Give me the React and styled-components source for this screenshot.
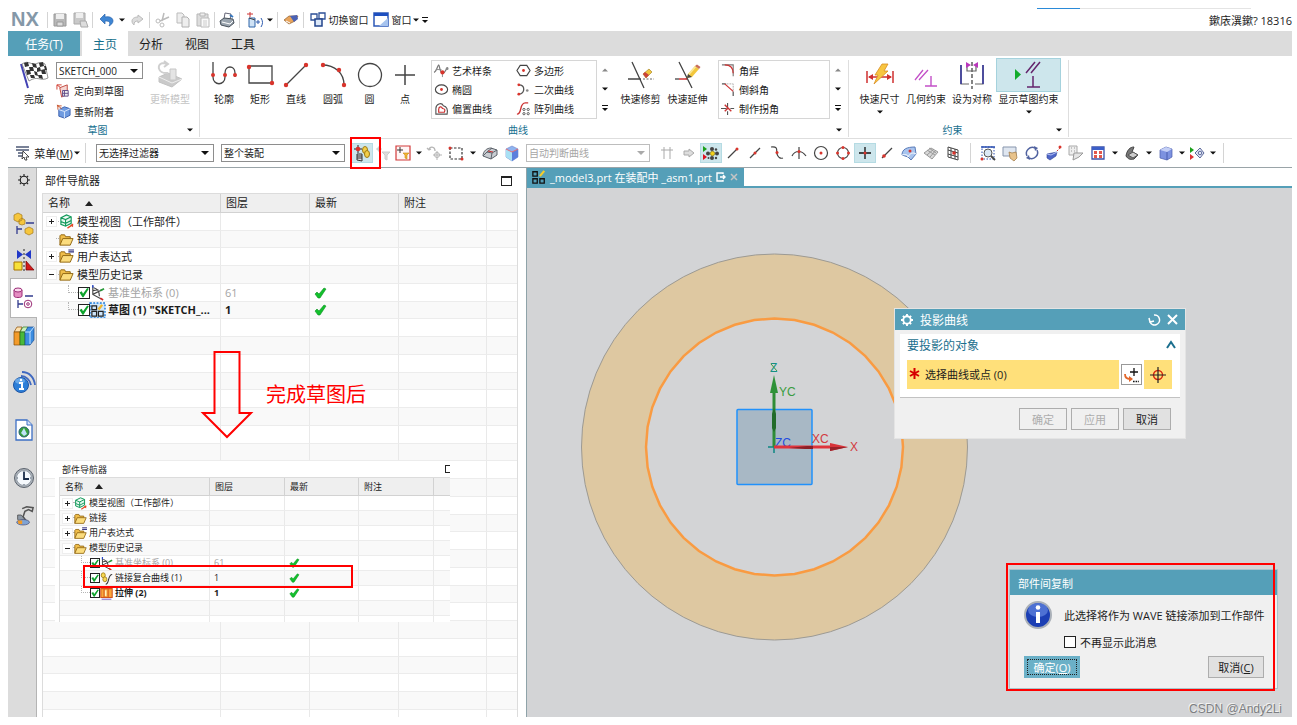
import React from "react";
import styled, { createGlobalStyle, css } from "styled-components";

const teal = "#559fb8";
const hot = "#cde6ec";
const ink = "#1c1c1c";
const font = '"Open Sans", "Noto Sans CJK SC", sans-serif';

const Global = createGlobalStyle`
  * { box-sizing: border-box; }
  body { margin: 0; background: #fff; color: ${ink}; font-family: ${font}; font-size: 11px; }
  button, input, select { font: inherit; color: inherit; margin: 0; padding: 0; }
  button { background: none; border: 0; white-space: nowrap; }
`;

/* ---------- icons ---------- */
const Svg = styled.svg`
  display: block;
  flex: none;
  overflow: visible;
`;
const Icon = ({ size = 16, box = 16, children, ...p }) => (
  <Svg width={size} height={size} viewBox={`0 0 ${box} ${box}`} fill="none" stroke="#444" strokeWidth="1" aria-hidden="true" {...p}>
    {children}
  </Svg>
);
const Dot = ({ x, y, r = 1.5 }) => <circle cx={x} cy={y} r={r} fill="#d8342c" stroke="none" />;
const Arrow = ({ color = "#111", bar, up }) => (
  <Svg width="6" height={bar ? 6 : 4} viewBox={bar ? "0 0 6 6" : "0 0 6 4"} aria-hidden="true">
    {bar && <path d="M0 0h6v1H0z" fill={color} />}
    <path d={bar ? "M0 3h6L3 6z" : up ? "M0 3.5h6L3 .5z" : "M0 .5h6L3 3.5z"} fill={color} />
  </Svg>
);

const pencil = (
  <g stroke="none">
    <path d="M9 13l1-4 7-8 4 3-7 8z" fill="#f3c73c" />
    <path d="M10 9l7-8 1.300 1-7 8z" fill="#fae896" />
    <path d="M17 1l2-1.500L22.500 2 21 4z" fill="#c86e5a" />
    <path d="M9 13l1-4 4 3z" fill="#444" />
  </g>
);

const art = {
  save: <><path d="M2 2h12v12H2z" fill="#b7b7b7" stroke="#999" /><path d="M4 2h8v5H4z" fill="#eee" stroke="none" /><path d="M5 10h6v4H5z" fill="#ddd" stroke="#999" /></>,
  saveAs: <><path d="M1 1h11v11H1z" fill="#c9c9c9" stroke="#aaa" /><path d="M3 1h7v5H3z" fill="#eee" stroke="none" /><path d="M7 9h6l2 6H8z" fill="#ddd" stroke="#aaa" /></>,
  undo: <path d="M2 7l5-5v3c5-1 8 1 8 4 0 2-2 4-4 5 2-4 0-5-4-5v3z" fill="#3f86d4" stroke="#2b64ac" strokeWidth=".7" />,
  redo: <path d="M14 7L9 3v2c-4 0-6 2-6 4 0 2 1 3 2 4 0-3 1-4 4-4v2z" fill="#ddd" stroke="#bbb" />,
  cut: <><path d="M10 1L8 9M15 5L6 9" stroke="#bbb" strokeWidth="1.500" /><circle cx="4" cy="9" r="2" stroke="#bbb" /><circle cx="8" cy="13" r="2" stroke="#bbb" /></>,
  copy: <><path d="M2 1h5l2 2v8H2z" fill="#eee" stroke="#bbb" /><path d="M7 5h5l2 2v8H7z" fill="#eee" stroke="#b0b0b0" /></>,
  paste: <><path d="M2 2h11v12H2z" fill="#ddd" stroke="#b7b7b7" /><path d="M5 1h5v3H5z" fill="#eee" stroke="#b7b7b7" /><path d="M6 6h8v9H6z" fill="#fafafa" stroke="#bbb" /><path d="M8 9h4M8 11h4M8 13h4" stroke="#ccc" /></>,
  print: <><path d="M6 1l6 1-1 6-6-1z" fill="#fff" stroke="#667" /><path d="M1 9l4-3 9 1 1 4-5 4-8-2z" fill="#9aa4ae" stroke="#47505a" /><path d="M3 10l8 2 3-3" stroke="#fff" /><path d="M11 3l3 2" stroke="#3476bf" strokeWidth="2" /></>,
  datum: <><path d="M0 2h6M3 0v5" stroke="#c33" /><path d="M2 6h6v9H2z" fill="#cfe2f5" stroke="#2e64a8" /><path d="M2 6l6 2" stroke="#444" /><path d="M9 10h4M11 8v4M14 6c2 3 2 6 0 9" stroke="#2e5cb0" /></>,
  wipe: <><path d="M1 8l5-4 9 0-3 5-6 3z" fill="#e8a45b" stroke="#91602e" strokeWidth=".7" /><path d="M7 4l7-1 1 4-4 3z" fill="#4b62b4" stroke="none" /><path d="M3 9l4 2" stroke="#fff" /></>,
  cascade: <><path d="M1 2h6v6H1zM9 1h6v6H9z" fill="#fff" stroke="#2c4f96" strokeWidth="1.300" /><path d="M5 7h7v7H5z" fill="#dce8f8" stroke="#23448c" strokeWidth="1.500" /></>,
  windowBlue: <><path d="M1 1h14v13H1z" fill="#fff" stroke="#2c58b8" strokeWidth="1.500" /><path d="M1 1h14v3H1z" fill="#1e4fc0" stroke="none" /><path d="M15 14V6L6 14z" fill="#a7c4ef" stroke="none" /></>,
  orient: <><path d="M1 2h5M1 2v5M1 2l4 3" stroke="#d13b2e" /><path d="M4 5l8-3v10l-6 3z" fill="#f6d6d2" stroke="#c0453c" /><path d="M7 8h6v6H7zM9 8v6M7 11h6" fill="#eee" stroke="#5f4a86" /></>,
  reattach: <><path d="M3 6l6-3 6 2v7l-6 3-6-2z" fill="#6f9be0" stroke="#3a5fae" /><path d="M3 6l6 2 6-3M9 8v7" stroke="#dbe8fb" /><path d="M1 2h5M2 1v5M1 1l5 4" stroke="#c8532c" /></>,
  spline: <><path d="M0 10c3-1 4-8 5-8s1 8 4 9 3-5 6-6" stroke="#777" strokeWidth="1.300" /><path d="M2 7h6M9 11v4" stroke="#888" /><Dot x="9" y="10" r="2.200" /><circle cx="14" cy="6" r="1.500" fill="#888" stroke="none" /></>,
  ellipse: <><ellipse cx="8" cy="8" rx="6.500" ry="5" strokeWidth="1.200" /><Dot x="8" y="8" /></>,
  offset: <><path d="M2 14V8c0-5 6-7 8-3 4 1 5 4 4 9z" stroke="#555" strokeWidth="1.200" /><path d="M5 12V9c0-3 3-4 4-1 3 0 3 2 2 4z" stroke="#c33" strokeWidth="1.300" /></>,
  polygon: <><path d="M4.500 2.500h7L15 8l-3.500 5.500h-7L1 8z" strokeWidth="1.200" /><Dot x="8" y="8" /></>,
  conic: <><path d="M3 3c7 0 7 9 0 10" stroke="#555" strokeWidth="1.400" /><Dot x="3" y="3" /><Dot x="3" y="13" /><circle cx="12" cy="9" r="1.400" fill="#888" stroke="none" /></>,
  pattern: <><path d="M1 14c6 0 2-12 9-12h3" stroke="#c33" strokeWidth="1.500" /><g stroke="#555"><circle cx="8.500" cy="9" r="1.200" /><circle cx="13" cy="9" r="1.200" /><circle cx="8.500" cy="13.500" r="1.200" /><circle cx="13" cy="13.500" r="1.200" /></g></>,
  corner: <><path d="M1 2h12v12" stroke="#777" strokeWidth="1.200" /><path d="M4 2c6 0 9 3 9 9" stroke="#c33" strokeWidth="1.300" /></>,
  chamfer: <><path d="M1 2h4M13 10v5" stroke="#555" strokeWidth="1.300" /><path d="M6 2h7v7" stroke="#aaa" strokeDasharray="2 1" /><path d="M4 2l9 8" stroke="#c33" strokeWidth="1.300" /></>,
  makeCorner: <><path d="M0 8h6M7 2v6M7 11v4M10 8h4" stroke="#555" strokeWidth="1.200" /><path d="M4 4l4 4 3 3M7 8l-3 3" stroke="#c33" strokeWidth="1.500" /></>,
  menu: <><path d="M1 2h13M1 5h13M3 8h6M3 11h5" stroke="#4d5a75" strokeWidth="1.400" /><path d="M8 6l6 6-3 0 1 3-2 0-1-3-2 2z" fill="#fff" stroke="#222" strokeWidth=".8" /></>,
  link: <><path d="M4 0v8M0 4h8" stroke="#222" /><Dot x="4" y="4" r="2.300" /><path d="M3 9v6l5 1V9zM3 11h5M3 13h5" stroke="#333" fill="#ddd" /><ellipse cx="11" cy="5" rx="2.500" ry="3.500" fill="#f3cf48" stroke="#9c7a14" /><ellipse cx="13" cy="9" rx="2.500" ry="3.500" fill="#f3cf48" stroke="#9c7a14" /></>,
  filterGrey: <><path d="M4 1v6M1 4h6" stroke="#ccc" /><circle cx="4" cy="4" r="2" fill="#ccc" stroke="none" /><path d="M7 7h8l-3 3v5l-2-1v-4z" fill="#ddd" stroke="#ccc" /></>,
  filterBox: <><path d="M1 1h14v14H1z" fill="#fff5f5" stroke="#d23a3a" strokeWidth="1.200" /><path d="M5 2v6M2 5h6" stroke="#333" /><path d="M8 8h6l-2 2v4l-2-1v-3z" fill="#f2b632" stroke="#c78610" strokeWidth=".6" /></>,
  rotateGrey: <><path d="M2 5c0-4 6-4 6 1M2 5L0 3M2 5l2-1" stroke="#b5b5b5" strokeWidth="1.300" /><path d="M10 6v9M6 10h9" stroke="#b5b5b5" /><circle cx="10" cy="10" r="2.500" stroke="#b5b5b5" /></>,
  marquee: <><path d="M2 3h12v11H2z" strokeDasharray="2.500 1.500" stroke="#333" strokeWidth="1.200" /><Dot x="2" y="3" /><Dot x="14" y="14" /></>,
  shell: <><path d="M1 11c0-5 4-8 8-8l6 2v5l-6 4z" fill="#c9cdd2" stroke="#5d636b" /><path d="M1 11l4-4 5 1-1 6M5 7l5-4M10 8l5-3" stroke="#5d636b" /><path d="M6 6l5 1" stroke="#c33" /></>,
  cubeGlass: <><path d="M2 4l6-3 6 3v8l-6 4-6-4z" fill="#8fb4f0" stroke="#6d83c8" strokeWidth=".6" /><path d="M2 4l6 3v9l-6-4z" fill="#a8e0f4" stroke="none" /><path d="M8 7l6-3v8l-6 4z" fill="#5b7fdc" stroke="none" /><path d="M2 4l6 3 6-3" stroke="#e46b74" /></>,
  hash: <path d="M5 2v12M11 2v12M2 5h12" stroke="#aaa" />,
  arrowGrey: <path d="M3 6h5V4l5 4-5 4v-2H3z" fill="#ddd" stroke="#aaa" />,
  snapAll: <><path d="M0 1v6l4-3z" fill="#1aa01a" stroke="none" /><path d="M0 9v6l4-3z" fill="#d12" stroke="none" /><g fill="#444" stroke="none"><circle cx="9" cy="4" r="2" /><circle cx="9" cy="13" r="2" /><circle cx="5" cy="8.500" r="2" /><circle cx="14" cy="8.500" r="2" /><circle cx="5.500" cy="13" r="1" /><circle cx="13" cy="4.500" r="1.200" /><circle cx="13" cy="13" r="1.200" /></g><circle cx="9.500" cy="8.500" r="2.200" fill="#f5d21a" stroke="#7a6500" strokeWidth=".6" /></>,
  endPoint: <><path d="M3 13L12 4" strokeWidth="1.200" /><Dot x="12" y="4" /></>,
  midPoint: <><path d="M3 13L13 3" strokeWidth="1.200" /><Dot x="8" y="8" /></>,
  ctrlPoint: <><path d="M2 2c8-1 5 4 6 7s3 5 6 4" strokeWidth="1.200" /><Dot x="8" y="7.500" /></>,
  intersect: <><path d="M1 11c3-6 10-6 14 0M8 2v12" strokeWidth="1.200" /><Dot x="8" y="6.500" /></>,
  arcCenter: <><circle cx="8" cy="8" r="6.500" strokeWidth="1.200" /><Dot x="8" y="8" /></>,
  quadrant: <><circle cx="8" cy="8" r="5.500" strokeWidth="1.200" /><Dot x="8" y="2.500" /><Dot x="8" y="13.500" /><Dot x="2.500" y="8" /><Dot x="13.500" y="8" /></>,
  existing: <><path d="M8 2v12M2 8h12" stroke="#111" strokeWidth="1.300" /><Dot x="8" y="8" /></>,
  onCurve: <><path d="M3 13L13 3" strokeWidth="1.200" /><Dot x="5" y="11" r="1.800" /></>,
  onFace: <><path d="M1 10C1 4 6 2 14 2l1 7-5 6-3-3z" fill="#a8c4ee" stroke="#5a7bb8" /><path d="M1 10c4-1 6 0 6 2M7 12c2-4 5-5 8-3" stroke="#fff" /><Dot x="9" y="6" /></>,
  facet: <><path d="M1 8l7-5 7 4-6 7z" fill="#d8d8d8" stroke="#999" /><path d="M4 5l8 5M6 3l7 5M4 10l7-6M7 12l6-7" stroke="#999" /></>,
  gridPt: <><path d="M3 2l10 3v10L3 12zM6 3v10M10 4v10M3 5l10 3M3 9l10 3" stroke="#444" /><Dot x="9" y="8" r="1.800" /></>,
  fit: <><path d="M2 2h12v12H2z" strokeDasharray="1.500 1.500" stroke="#2b4fb0" /><circle cx="8" cy="8" r="4" fill="#dbe8f5" stroke="#555" /><path d="M11 11l4 4" strokeWidth="1.800" /><Dot x="2" y="14" /><path d="M1 2h14" stroke="#2b4fb0" strokeWidth="1.500" /></>,
  pan: <><path d="M1 2h13v9H1z" fill="#dfe6f0" stroke="#8795ac" /><path d="M7 7l3 1 4-1 1 6-3 3-4-3z" fill="#e8c38c" stroke="#9c7642" strokeWidth=".7" /></>,
  rotate: <><path d="M3 11a6 6 0 0 1 8-8M13 5a6 6 0 0 1-8 8" stroke="#5163a0" strokeWidth="1.500" /><path d="M10 1l4 2-3 3zM6 15l-4-2 3-3z" fill="#5163a0" stroke="none" /></>,
  perspective: <><path d="M1 9l5-1 5-1-1 4-6 4-3-2z" fill="#4f66c8" stroke="#2f3f90" strokeWidth=".6" /><path d="M1 9l4 1 6-3" stroke="#b7c4f4" /><path d="M11 6l4-4" strokeDasharray="1.500 1" stroke="#c33" /><Dot x="14" y="2" /></>,
  sheet: <><path d="M1 1h8v9H1z" fill="#eee" stroke="#aaa" /><path d="M3 3h1M6 3h1M3 6h1M6 6h1" stroke="#999" /><path d="M6 8l9 0-4 4-6 3z" fill="#e5e5e5" stroke="#999" /></>,
  layout: <><path d="M2 2h12v12H2z" fill="#fff" stroke="#3c52a8" strokeWidth="1.300" /><path d="M2 2h12v3H2z" fill="#3c5fc8" stroke="none" /><path d="M4 6h3v3H4zM9 6h3v3H9zM4 10h3v3H4zM9 10h3v3H9z" fill="#e2574c" stroke="none" /></>,
  clip: <><path d="M2 11c1-6 4-9 8-9l-2 5 6 3-4 4c-4 1-6 0-8-3z" fill="#777" stroke="#444" /><path d="M4 10l5-3 5 3-5 3z" fill="#ccc" stroke="#555" /></>,
  cube: <><path d="M2 5l6-3 6 2v8l-5 3-7-2z" fill="#7d92e0" stroke="#4a5cae" strokeWidth=".7" /><path d="M2 5l7 2 5-3-6-2z" fill="#c4cff6" stroke="none" /><path d="M9 7v8" stroke="#4a5cae" /></>,
  play: <><path d="M1 2v6l4-3z" fill="#1aa01a" stroke="none" /><path d="M1 9v6l4-3z" fill="#d33" stroke="none" /><path d="M6 8l5-5 4 5-4 5z" fill="#e4e8f6" stroke="#5a689a" /><circle cx="11" cy="8" r="1.800" stroke="#5a689a" /></>,
  gear: <><circle cx="8" cy="8" r="5" stroke="#222" strokeWidth="1.500" /><path d="M8 0v3M8 13v3M0 8h3M13 8h3M2.500 2.500l2 2M11.500 11.500l2 2M2.500 13.500l2-2M11.500 4.500l2-2" stroke="#222" strokeWidth="1.500" /></>,
};

const big = {
  flag: <><path d="M1 3l7 24" stroke="#4343b4" strokeWidth="2" /><path d="M2 3c7-5 10 3 16-1 3-1 5 0 7 1l3 14c-8 4-10-3-19 3z" fill="#fff" stroke="#666" strokeWidth=".7" /><g fill="#333" stroke="none"><path d="M4 2l4-1 1 4-4 1zM12 2l4 1 1 4-4-1zM19 2l4-1 1 4-4 1zM9 6l4 0 1 4-4 0zM17 7l3-1 1 4-4 1zM24 5l2 0 1 4-2 0zM6 9l4 0 1 4-4 1zM14 10l3 1 1 4-3-1zM21 9l4-1 1 5-4 0zM10 14l4 0 1 3-4 0zM18 14l4 0 1 4-4-1z" /></g></>,
  update: <><path d="M3 16l9-4 14 6-10 8L3 21z" fill="#cacaca" stroke="#c2c2c2" /><path d="M3 16l13 6 10-4" stroke="#eee" /><path d="M14 19V8h6v11z" fill="#e4e4e4" stroke="#c6c6c6" /><path d="M12 12C1 13 0 2 8 2l3 1M8 0l4 3-4 3" stroke="#cfcfcf" strokeWidth="2" /></>,
  profile: <><path d="M3 1v15c0 9 12 9 12 0v-4c0-8 10-8 10 0v4" strokeWidth="1.300" /><Dot x="3" y="14" r="2" /><Dot x="15" y="14" r="2" /><Dot x="25" y="14" r="2" /></>,
  rect: <><path d="M3 5h23v17H3z" strokeWidth="1.300" /><Dot x="3" y="6" r="2.200" /><Dot x="26" y="22" r="2.200" /></>,
  line: <><path d="M4 24L24 4" strokeWidth="1.300" /><Dot x="4" y="24" r="2.200" /><Dot x="24" y="4" r="2.200" /></>,
  arc: <><path d="M3 4c13 0 22 8 22 20" strokeWidth="1.300" /><Dot x="4" y="4" r="2.200" /><Dot x="20" y="9" r="2.200" /><Dot x="25" y="24" r="2.200" /></>,
  circle: <circle cx="14" cy="14" r="11.500" strokeWidth="1.300" />,
  point: <path d="M14 4v20M4 14h20" strokeWidth="1.500" />,
  trim: <><path d="M5 1l12 26M1 18h13" strokeWidth="1.300" /><path d="M16 18h11" strokeDasharray="2 1.500" stroke="#666" /><path d="M16 13l6-5 3 3-6 6z" fill="#f1c63e" stroke="#9d7d1c" strokeWidth=".6" /><path d="M16 13l2-2 4 3-3 3z" fill="#c9423b" stroke="none" /></>,
  extend: <><path d="M5 1l13 26M12 18L20 10" strokeWidth="1.300" /><path d="M1 18h4" strokeWidth="1.300" /><path d="M5 18h8" stroke="#c33" strokeWidth="1.500" /><g transform="translate(4 4)">{pencil}</g></>,
  dim: <><path d="M1 10v12M27 10v12M3 16h22" stroke="#cf3030" strokeWidth="1.500" /><path d="M2 16l5-3v6zM26 16l-5-3v6z" fill="#cf3030" stroke="none" /><path d="M16 3h6l-4 7h4L8 23l4-9H9z" fill="#f7c541" stroke="#d98e22" strokeWidth=".8" /></>,
  geo: <><path d="M3 19L11 9M7 19l9-10" stroke="#c350c8" strokeWidth="1.300" /><path d="M19 15v10M13 25h12" stroke="#c350c8" strokeWidth="1.400" /></>,
  sym: <><path d="M14 1v27" strokeDasharray="4 2" strokeWidth="1.300" /><path d="M3 4v19h8M25 4v19h-8M9 5v5h9V5" stroke="#666" strokeWidth="1.200" /><path d="M3 4v19M25 4v19" stroke="#33339c" strokeWidth="1.500" /><path d="M13 4L8 1v6zM15 4l5-3v6z" fill="#b937bb" stroke="none" /></>,
  show: <><path d="M0 8v11l6-5.500z" fill="#12ac2c" stroke="none" /><path d="M11 12L20 1M16 12l9-11M18 15v11M12 26h13" stroke="#64246c" strokeWidth="1.500" /></>,
};

const rail = {
  assembly: <><path d="M1 3l4-2 4 2v5l-4 2-4-2zM6 8l3-2 3 2v4l-3 1-3-1z" fill="#f6c63d" stroke="#a3791a" strokeWidth=".7" /><path d="M13 11h8M4 14v8M4 17h5" stroke="#333c8e" strokeWidth="1.300" /><path d="M12 17l4-2 4 2v4l-4 2-4-2z" fill="#f6c63d" stroke="#a3791a" strokeWidth=".7" /></>,
  mirror: <><path d="M4 1v9l6-4.500zM18 1v9l-6-4.500z" fill="#2138c8" stroke="none" /><path d="M11 0v22" strokeDasharray="2 2" stroke="#222" /><path d="M1 13h8v8H1z" fill="#f7e13a" stroke="#a87400" /><path d="M13 12v9h8z" fill="#d31a1a" stroke="#700" strokeWidth=".7" /></>,
  part: <><path d="M1 3v6c0 2 8 2 8 0V3" fill="#e58fc3" stroke="#9b2d76" /><ellipse cx="5" cy="3" rx="4" ry="2" fill="#fbd8ee" stroke="#9b2d76" /><path d="M12 9h8M5 13v8M5 17h5" stroke="#333c8e" strokeWidth="1.300" /><circle cx="15" cy="17" r="3.800" stroke="#9b2d76" /><circle cx="15" cy="17" r="1.300" stroke="#9b2d76" /></>,
  books: <><path d="M1 7l3-5h5L7 7z" fill="#fde0ae" stroke="#874b05" strokeWidth=".7" /><path d="M1 7h6v13H1z" fill="#f39b2b" stroke="#874b05" strokeWidth=".7" /><path d="M7 7l3-5h5l-2 5z" fill="#caf0bb" stroke="#2b7a1d" strokeWidth=".7" /><path d="M7 7h5v13H7z" fill="#49b93a" stroke="#256d18" strokeWidth=".7" /><path d="M12 7l3-5h6v13l-4 5h-5z" fill="#3c8de0" stroke="#1b4e91" strokeWidth=".7" /><path d="M17 7v12M12 7h5l4-5" stroke="#bfe0ff" /></>,
  info: <><path d="M8 5c5 0 9 4 10 9M9 1c7 0 12 5 13 13" stroke="#3f68c0" strokeWidth="1.800" /><circle cx="8" cy="14" r="7.500" fill="#2e7fd8" stroke="#1d55a4" /><ellipse cx="7" cy="10" rx="5" ry="3" fill="#8cc2f4" stroke="none" opacity=".6" /><path d="M6 12h3v6M6 18h5" stroke="#fff" strokeWidth="2" /><circle cx="8" cy="9" r="1.200" fill="#fff" stroke="none" /></>,
  page: <><path d="M3 1h11l5 5v15H3z" fill="#fff" stroke="#3d6fc4" strokeWidth="1.300" /><path d="M14 1v5h5" fill="#d6e4fa" stroke="#3d6fc4" /><circle cx="11" cy="13" r="5" fill="#38a13e" stroke="#24606e" /><path d="M11 9l3 6-3 2-3-3z" fill="#bfe3f7" stroke="none" /></>,
  clock: <><circle cx="11" cy="11" r="9.500" fill="#aab1b9" stroke="#5c646e" /><circle cx="11" cy="11" r="7.500" fill="#f5f9fd" stroke="#98a1ab" /><path d="M11 5v7h5" stroke="#1b2d4a" strokeWidth="1.800" /><path d="M11 4v1M11 17v1M4 11h1M17 11h1" stroke="#456" /></>,
  robot: <><path d="M9 4l5-2 7 1-1 4-4-2-4 2-2 6 4 5" stroke="#555" strokeWidth="1.700" /><path d="M4 11l4 0 4 5-4 3-4-3z" fill="#8e99a6" stroke="#444" strokeWidth=".8" /><ellipse cx="10" cy="19" rx="7" ry="3" fill="#7fa3d4" stroke="#446" strokeWidth=".7" /><path d="M4 17h5v4H5z" fill="#f29a26" stroke="none" /></>,
};

const Folder = () => <><path d="M1 14V4l1-1h4l1 2h5v2" fill="#f0be4a" stroke="#8f6410" /><path d="M1 14l3-7h11l-3 7z" fill="#fbdc7d" stroke="#8f6410" /></>;
const tree = {
  view: <><path d="M2 4l6-3 5 2v7l-6 3-5-2zM2 4l5 2 6-3M7 6v7M2 8l5 2 6-3" stroke="#12995a" fill="#e2f6ec" strokeWidth="1.200" /><path d="M9 15l6-4" stroke="#e34b28" strokeWidth="1.500" /><path d="M15 10v4l-3-2z" fill="#e34b28" stroke="none" /></>,
  folder: <Folder />,
  folderExpr: <><Folder /><path d="M10 1h6M10 3h6" stroke="#2b2b7c" strokeWidth="1.200" /></>,
  csys: <><path d="M3 1v9l9 5M3 10l10-5M4 3c4 1 6 4 6 9M3 6l6-1" stroke="#444" strokeWidth="1.200" /><path d="M11 6l4-2" stroke="#2b9b3a" strokeWidth="1.800" /><path d="M3 3V0" stroke="#2a49c9" strokeWidth="1.500" /><path d="M11 14l3 2" stroke="#cf2626" strokeWidth="1.800" /></>,
  sketch: <><path d="M0 0h16v16H0z" fill="#cfe6fb" stroke="#1b7bd9" strokeWidth="1.500" strokeDasharray="2 1.500" /><path d="M2 3h5v4H2zM2 9h5v5H2zM9 9h5v5H9z" stroke="#222" strokeWidth="1.300" /><path d="M9 7l4-5" stroke="#f0b62a" strokeWidth="2.500" /></>,
  linked: <><ellipse cx="4" cy="4" rx="2.500" ry="3" fill="#f7d952" stroke="#9c7a14" /><ellipse cx="6" cy="9" rx="2.500" ry="3" fill="#f7d952" stroke="#9c7a14" /><path d="M7 15c5 0 2-12 8-12" stroke="#333" strokeWidth="1.300" /></>,
  extrude: <><path d="M1 2h4v11H1zM5 2h5v11H5zM10 2h5v11h-5z" fill="#f9a63a" stroke="#d2531a" strokeWidth="1.300" /><path d="M7 4v7" stroke="#fff3c0" strokeWidth="2" /><path d="M2 15h12" stroke="#7a5cc0" strokeWidth="1.200" /></>,
};

/* ---------- frame ---------- */
const Window = styled.div`
  display: flex;
  flex-direction: column;
  height: 100vh;
  padding: 8px 5px 8px 8px;
  overflow: hidden;
`;
const TitleBar = styled.header`
  position: relative;
  display: flex;
  align-items: center;
  flex: none;
  height: 23px;
  font-size: 10px;
`;
const Progress = styled.div`
  position: absolute;
  top: 0;
  right: 41px;
  width: 214px;
  height: 1px;
  background: linear-gradient(to right, #2a8ad8 43px, #e4e4e4 43px);
`;
const Logo = styled.strong`
  width: 38px;
  padding-left: 3px;
  color: #8498a8;
  font: bold 20px "Liberation Sans", sans-serif;
`;
const Sep = styled.i`
  flex: none;
  width: 1px;
  height: ${(p) => p.$h || 16}px;
  margin: 0 ${(p) => p.$m || 0}px;
  background: #d4d4d4;
`;
const Tool = styled.button`
  position: relative;
  display: flex;
  align-items: center;
  justify-content: center;
  gap: 3px;
  flex: none;
  width: ${(p) => (p.$w ? p.$w + "px" : "22px")};
  height: 20px;
  ${(p) => p.$hot && css`background: ${hot}; box-shadow: inset 0 0 0 1px #b5dbe3;`}
`;
const UserName = styled.span`
  flex: none;
  margin-left: auto;
  font-size: 11px;
  white-space: nowrap;
`;
const Tabs = styled.nav`
  display: flex;
  flex: none;
  height: 25px;
  background: #dcdcdc;
`;
const Tab = styled.button`
  width: ${(p) => (p.$task ? 72 : 46)}px;
  margin-right: ${(p) => (p.$task ? 2 : 0)}px;
  font-size: 12px;
  background: ${(p) => (p.$task ? teal : p.$on ? "#fff" : "none")};
  color: ${(p) => (p.$task ? "#fff" : p.$on ? "#146f8c" : ink)};
`;

/* ---------- ribbon ---------- */
const Ribbon = styled.section`
  display: flex;
  flex: none;
  height: 83px;
  padding: 4px 0 1px;
  border-bottom: 1px solid #dedede;
`;
const Group = styled.section`
  display: flex;
  flex-direction: column;
  flex: none;
  width: ${(p) => p.$w}px;
  border-right: 1px solid #dedede;
`;
const GroupBody = styled.div`
  display: flex;
  flex: 1;
  padding-left: ${(p) => p.$pad}px;
`;
const GroupFoot = styled.footer`
  display: flex;
  align-items: center;
  height: 15px;
  padding-right: 6px;
  color: #17708f;
  font-size: 10px;
`;
const GroupName = styled.span`
  flex: 1;
  text-align: center;
`;
const Big = styled.button`
  display: flex;
  flex-direction: column;
  align-items: center;
  width: ${(p) => p.$w}px;
  height: 58px;
  font-size: 10px;
  line-height: 14px;
  color: ${(p) => (p.disabled ? "#c4c4c4" : ink)};
`;
const BigPic = styled.span`
  display: flex;
  align-items: center;
  justify-content: center;
  flex: none;
  width: ${(p) => (p.$hot ? 65 : 32)}px;
  height: 34px;
  margin-top: -2px;
  ${(p) => p.$hot && css`background: ${hot}; box-shadow: inset 0 0 0 1px #a5d2dd;`}
`;
const BigArrow = styled.span`
  padding-top: 4px;
`;
const SketchCol = styled.div`
  display: flex;
  flex-direction: column;
  gap: 2px;
  width: 90px;
  padding-top: 2px;
`;
const SmallCmd = styled.button`
  display: flex;
  align-items: center;
  gap: 3px;
  height: 19px;
  font-size: 10px;
  text-align: left;
`;
const Gallery = styled.div`
  display: grid;
  grid-template-columns: ${(p) => p.$cols};
  grid-auto-rows: 19px;
  width: ${(p) => p.$w}px;
  height: 59px;
  padding: 0 2px;
  border: 1px solid #d6d6d6;
`;
const Scroller = styled.div`
  display: flex;
  flex-direction: column;
  width: 16px;
  height: 58px;
  button { display: flex; flex: 1; align-items: center; justify-content: center; }
`;
const Space = styled.i`
  flex: none;
  width: ${(p) => p.$w}px;
`;

/* ---------- selects ---------- */
const SelectBox = styled.label`
  position: relative;
  display: flex;
  flex: none;
  width: ${(p) => p.$w}px;
  height: ${(p) => p.$h || 18}px;
  color: ${(p) => (p.$off ? "#a6a6a6" : ink)};
  font-size: 10px;
  select {
    appearance: none;
    width: 100%;
    padding: 0 16px 0 2px;
    border: 1px solid ${(p) => (p.$off ? "#bdbdbd" : "#8e8e8e")};
    border-radius: 0;
    background: #fff;
    color: inherit;
    opacity: 1;
  }
  svg { position: absolute; right: 5px; top: 7px; }
`;
const Combo = ({ label, value, w, h, off }) => (
  <SelectBox $w={w} $h={h} $off={off}>
    <select aria-label={label} disabled={off}><option>{value}</option></select>
    <Svg width="8" height="4" viewBox="0 0 8 4"><path d="M0 0h8L4 4z" fill={off ? "#aaa" : "#111"} /></Svg>
  </SelectBox>
);

const SelectionBar = styled.section`
  display: flex;
  align-items: center;
  flex: none;
  height: 29px;
  padding-left: 8px;
  border-bottom: 1px solid #9aa4a8;
`;
const Marked = styled.span`
  position: relative;
  &::after {
    content: "";
    position: absolute;
    inset: -6px -8px -6px -1px;
    border: 2px solid #f00;
    z-index: 3;
  }
`;

/* ---------- body ---------- */
const Body = styled.main`
  display: flex;
  flex: 1;
  min-height: 0;
`;
const Rail = styled.nav`
  display: flex;
  flex-direction: column;
  flex: none;
  width: 29px;
  background: #dcdcdc;
  border-right: 1px solid #b4b4b4;
`;
const RailButton = styled.button`
  display: flex;
  align-items: center;
  justify-content: center;
  flex: none;
  height: ${(p) => p.$h}px;
  margin-top: ${(p) => p.$mt || 0}px;
  padding-left: 3px;
  ${(p) => p.$on && css`background: #fff; margin-left: 2px; margin-right: -1px; padding-left: 0; border: 1px solid #b4b4b4; border-right: 0;`}
`;
const Side = styled.aside`
  position: relative;
  display: flex;
  flex-direction: column;
  flex: none;
  width: 490px;
  padding: 0 8px 0 5px;
  overflow: hidden;
  border-right: 1px solid #8fa3a9;
`;
const PanelTitle = styled.h2`
  display: flex;
  align-items: center;
  justify-content: space-between;
  flex: none;
  height: ${(p) => (p.$small ? 16 : 25)}px;
  margin: 0;
  padding: 0 ${(p) => (p.$small ? 0 : 6)}px 0 3px;
  font-size: ${(p) => (p.$small ? 9 : 11)}px;
  font-weight: 400;
  line-height: 1;
`;
const Maximize = styled.button`
  flex: none;
  width: ${(p) => (p.$small ? 5 : 11)}px;
  height: ${(p) => (p.$small ? 8 : 10)}px;
  border: 1px solid #222;
  border-top-width: ${(p) => (p.$small ? 1 : 2)}px;
  border-right-width: ${(p) => (p.$small ? 0 : 1)}px;
`;
const TableFrame = styled.div`
  flex: 1;
  min-height: 0;
  overflow: hidden;
  border: 1px solid #dcdcdc;
  border-width: 1px ${(p) => (p.$small ? 0 : 1)}px 0 1px;
`;
const Grid = styled.table`
  width: 100%;
  table-layout: fixed;
  border-collapse: separate;
  border-spacing: 0;
  font-size: ${(p) => (p.$small ? 9 : 11)}px;
  line-height: ${(p) => (p.$small ? 12 : 14)}px;
  white-space: nowrap;
  th, td { padding: 0 0 0 4px; border-right: 1px solid #e9e9e9; border-bottom: 1px solid #ececec; text-align: left; font-weight: inherit; overflow: hidden; }
  th { height: ${(p) => (p.$small ? 18 : 19)}px; padding-left: 5px; background: #efefef; border-color: #d2d2d2; font-weight: 400; }
  td { height: ${(p) => (p.$small ? 15 : 18)}px; }
  ${(p) => !p.$small && css`tbody tr:nth-child(4n + 2) td { height: 17px; }`}
  tbody tr:nth-child(even) { background: #f9f9f9; }
  td:first-child { padding-left: 0; }
  tr > :last-child { border-right: 0; }
`;
const Row = styled.tr`
  color: ${(p) => (p.$dim ? "#a4a4a4" : ink)};
  font-weight: ${(p) => (p.$bold ? 700 : 400)};
`;
const Sorted = styled.span`
  display: inline-flex;
  align-items: center;
  gap: ${(p) => (p.$small ? 12 : 15)}px;
`;
const TreeCell = styled.div`
  display: flex;
  align-items: center;
  height: ${(p) => (p.$small ? 14 : 16)}px;
  padding-left: ${(p) => (p.$small ? 3 : 4)}px;
`;
const Expander = styled.button`
  position: relative;
  flex: none;
  width: 9px;
  height: 9px;
  background: #fff;
  box-shadow: 0 0 0 1px #eee;
  visibility: ${(p) => (p.$none ? "hidden" : "visible")};
  &::before { content: ""; position: absolute; left: 2px; top: 4px; width: 5px; height: 1px; background: #222; }
  &::after { content: ""; position: absolute; left: 4px; top: 2px; width: 1px; height: 5px; background: #222; display: ${(p) => (p.$open ? "none" : "block")}; }
`;
const Branch = styled.i`
  align-self: flex-start;
  flex: none;
  width: ${(p) => p.$w}px;
  height: 50%;
  margin-left: ${(p) => p.$ml || 0}px;
  border-bottom: 1px dotted #b5b5b5;
  border-left: ${(p) => (p.$ml ? "1px dotted #b5b5b5" : 0)};
`;
const Tick = styled.input`
  appearance: none;
  position: relative;
  flex: none;
  width: ${(p) => p.$s}px;
  height: ${(p) => p.$s}px;
  border: 1px solid #222;
  background: #fff;
  &:checked::after {
    content: "";
    position: absolute;
    inset: 0;
    background: #0da32c;
    clip-path: polygon(5% 50%, 28% 38%, 40% 62%, 82% 5%, 98% 12%, 45% 98%, 35% 98%);
  }
`;
const NodeName = styled.span`
  margin-left: ${(p) => (p.$small ? 2 : 3)}px;
`;
const Check = ({ s = 12 }) => (
  <Svg width={s} height={s} viewBox="0 0 12 12" role="img" aria-label="最新">
    <path d="M1 7l2-2 2 2 5-6 2 1-6 9H4z" fill="#12c02c" stroke="#0c8f20" strokeWidth=".6" />
  </Svg>
);

const Snapshot = styled.div`
  position: absolute;
  left: 18px;
  top: 293px;
  display: flex;
  flex-direction: column;
  width: 395px;
  height: 161px;
  padding-left: 4px;
  background: #fff;
`;
const RedBox = styled.div`
  position: absolute;
  left: ${(p) => p.$x}px;
  top: ${(p) => p.$y}px;
  width: ${(p) => p.$w}px;
  height: ${(p) => p.$h}px;
  border: 2px solid #f00;
  pointer-events: none;
`;
const Note = styled.div`
  position: absolute;
  left: 165px;
  top: 183px;
  display: flex;
  align-items: center;
  gap: 14px;
  color: #f00;
  font-size: 20px;
  line-height: 24px;
`;

/* ---------- graphics window ---------- */
const Viewport = styled.section`
  display: flex;
  flex-direction: column;
  flex: 1;
  min-width: 0;
`;
const FileTabs = styled.div`
  display: flex;
  flex: none;
  height: 20px;
  border-bottom: 2px solid ${teal};
`;
const FileTab = styled.div`
  display: flex;
  align-items: center;
  gap: 4px;
  padding: 0 6px 0 5px;
  background: ${teal};
  color: #fff;
  font-size: 11px;
  white-space: nowrap;
`;
const CloseX = styled.button`
  display: flex;
`;
const Canvas = styled.div`
  position: relative;
  flex: 1;
  min-height: 0;
  overflow: hidden;
  background: #d3d4d6;
`;
const Dialog = styled.section`
  position: absolute;
  left: ${(p) => p.$x}px;
  top: ${(p) => p.$y}px;
  width: ${(p) => p.$w}px;
  background: #f0f0f0;
  box-shadow: 0 0 0 1px ${(p) => (p.$edge ? "#aac4cb" : "#e4e4e4")};
`;
const DialogTitle = styled.header`
  display: flex;
  align-items: center;
  gap: 7px;
  height: ${(p) => p.$h}px;
  padding: 0 7px 0 ${(p) => p.$pad || 6}px;
  background: ${teal};
  color: #fff;
  font-size: ${(p) => p.$size}px;
  span { flex: 1; }
`;
const Section = styled.div`
  margin: 4px 5px 0;
  padding: 0 8px 8px 7px;
  background: #fff;
  border-bottom: 1px solid #c2c2c2;
`;
const SectionTitle = styled.h3`
  display: flex;
  align-items: center;
  justify-content: space-between;
  height: 22px;
  margin: 0 -4px 4px 0;
  color: #1b6f8e;
  font-size: 12px;
  font-weight: 400;
`;
const PickRow = styled.div`
  display: flex;
  align-items: center;
  height: 29px;
`;
const Pick = styled.button`
  display: flex;
  align-items: center;
  gap: 5px;
  flex: 1;
  height: 29px;
  padding: 0 0 2px 2px;
  background: #ffe07a;
`;
const PickTool = styled.button`
  display: flex;
  align-items: center;
  justify-content: center;
  width: ${(p) => (p.$on ? 28 : 21)}px;
  height: ${(p) => (p.$on ? 29 : 21)}px;
  margin-left: 2px;
  background: ${(p) => (p.$on ? "#ffe07a" : "#fff")};
  border: ${(p) => (p.$on ? "0" : "1px solid #999")};
`;
const Buttons = styled.div`
  display: flex;
  justify-content: ${(p) => (p.$spread ? "space-between" : "flex-end")};
  gap: 4px;
  padding: ${(p) => (p.$spread ? "1px 13px 10px 14px" : "10px 14px 8px")};
`;
const PushButton = styled.button`
  width: ${(p) => (p.$wide ? 56 : 48)}px;
  height: 22px;
  border: 1px solid #adadad;
  background: ${(p) => (p.$primary ? "#6bb0c7" : p.disabled ? "#f0f0f0" : "#e1e1e1")};
  color: ${(p) => (p.$primary ? "#fff" : p.disabled ? "#adadad" : ink)};
  ${(p) => p.$primary && css`border-color: #6bb0c7; outline: 1px dotted #222; outline-offset: -4px;`}
`;
const Message = styled.div`
  display: grid;
  grid-template-columns: 40px 1fr;
  align-items: center;
  padding: 6px 0 0 14px;
  white-space: nowrap;
`;
const Never = styled.label`
  display: flex;
  align-items: center;
  gap: 4px;
  height: 26px;
  padding-left: 54px;
`;
const Watermark = styled.span`
  position: absolute;
  right: 10px;
  bottom: 1px;
  color: #7d7f82;
  font: 12px "Liberation Sans", sans-serif;
  text-shadow: -1px -1px 0 #f4f4f4;
`;

const T = ({ i, w, hot: h, label }) => <Tool $w={w} $hot={h} aria-label={label || i}><Icon>{art[i]}</Icon></Tool>;
const Drop = ({ w = 12, bar }) => <Tool $w={w} aria-label="更多"><Arrow bar={bar} /></Tool>;
const BigTool = ({ i, w, children, hot: h, drop, disabled }) => (
  <Big $w={w} disabled={disabled}>
    <BigPic $hot={h}><Icon size={28} box={28}>{big[i]}</Icon></BigPic>
    {children}
    {drop && <BigArrow><Arrow /></BigArrow>}
  </Big>
);
const Small = ({ i, children }) => <SmallCmd><Icon size={15}>{art[i]}</Icon>{children}</SmallCmd>;
const GalleryScroll = () => (
  <Scroller>
    <button aria-label="向上"><Arrow up color="#888" /></button>
    <button aria-label="向下"><Arrow /></button>
    <button aria-label="展开"><Arrow bar /></button>
  </Scroller>
);

const mainRows = [
  { icon: "view", name: "模型视图（工作部件）" },
  { icon: "folder", name: "链接", leaf: true },
  { icon: "folderExpr", name: "用户表达式" },
  { icon: "folder", name: "模型历史记录", open: true },
  { icon: "csys", name: "基准坐标系 (0)", child: true, layer: "61", dim: true },
  { icon: "sketch", name: '草图 (1) "SKETCH_...', child: true, layer: "1", bold: true },
];
const snapRows = [
  { icon: "view", name: "模型视图（工作部件）" },
  { icon: "folder", name: "链接" },
  { icon: "folderExpr", name: "用户表达式" },
  { icon: "folder", name: "模型历史记录", open: true },
  { icon: "csys", name: "基准坐标系 (0)", child: true, layer: "61", dim: true },
  { icon: "linked", name: "链接复合曲线 (1)", child: true, layer: "1" },
  { icon: "extrude", name: "拉伸 (2)", child: true, layer: "1", bold: true },
];

const Navigator = ({ rows, total, cols, small }) => {
  const filled = [...rows, ...Array(total - rows.length).fill(null)];
  return (
    <TableFrame $small={small}>
      <Grid $small={small}>
        <colgroup>{cols.map((w, i) => <col key={i} width={w || undefined} />)}</colgroup>
        <thead>
          <tr>
            <th><Sorted $small={small}>名称<Svg width="8" height="5" viewBox="0 0 8 5"><path d="M0 5h8L4 0z" fill="#222" /></Svg></Sorted></th>
            <th>图层</th><th>最新</th><th>附注</th><th aria-label="空" />
          </tr>
        </thead>
        <tbody>
          {filled.map((r, i) =>
            r ? (
              <Row key={i} $dim={r.dim} $bold={r.bold}>
                <td>
                  <TreeCell $small={small}>
                    {r.child ? (
                      <><Branch $ml={small ? 18 : 21} $w={small ? 9 : 10} /><Tick type="checkbox" defaultChecked aria-label={r.name} $s={small ? 10 : 12} /></>
                    ) : (
                      <><Expander $open={r.open} $none={r.leaf} aria-label={r.name} /><Branch $w={small ? 2 : 3} /></>
                    )}
                    <Icon size={small ? 13 : 15}>{tree[r.icon]}</Icon>
                    <NodeName $small={small}>{r.name}</NodeName>
                  </TreeCell>
                </td>
                <td>{r.layer}</td>
                <td>{r.child && <Check s={small ? 10 : 12} />}</td>
                <td /><td />
              </Row>
            ) : (
              <Row key={i}><td /><td /><td /><td /><td /></Row>
            )
          )}
        </tbody>
      </Grid>
    </TableFrame>
  );
};

const ring = Array.from({ length: 40 }, (_, k) => {
  const a = (k * Math.PI) / 20;
  return `${247.5 + 128.5 * Math.cos(a)},${259 + 128.5 * Math.sin(a)}`;
}).join(" ");

const Model = () => (
  <Svg width="765" height="529" viewBox="0 0 765 529" role="img" aria-label="模型" fontFamily="Liberation Sans, sans-serif" fontSize="12">
    <circle cx="247.500" cy="259" r="193" fill="#dec8a1" stroke="#9c9a94" />
    <polygon points={ring} fill="#d3d4d6" stroke="#f99b42" strokeWidth="2.500" />
    <rect x="210" y="221.500" width="75" height="75" rx="1" fill="#a8b8c5" stroke="#2191fb" strokeWidth="1.500" />
    <text x="248" y="259" fill="#1f4be0">ZC</text>
    <path d="M241 259h12M247 253v12" stroke="#0d8783" strokeWidth="1.500" />
    <path d="M247 259V197" stroke="#2f8d36" strokeWidth="3" />
    <path d="M247 187l4 18h-8z" fill="#2f9238" />
    <path d="M247 220l2 6v14l-2 4-2-4v-14z" fill="#226b2a" />
    <path d="M247 259h57" stroke="#e0343c" strokeWidth="3" />
    <path d="M262 260l18-2h6v3h-8z" fill="#8c1f27" />
    <path d="M321 259l-18-4v8z" fill="#d8343a" />
    <path d="M321 259l-18 0v4z" fill="#9a222a" />
    <text x="243" y="184" fill="#159184">Z</text>
    <path d="M244 176l6 7" stroke="#3a9c40" />
    <text x="252" y="208" fill="#3a9c40">YC</text>
    <text x="285" y="255" fill="#d23a40">XC</text>
    <text x="323" y="263" fill="#d23a40">X</text>
  </Svg>
);

export default function App() {
  return (
    <Window>
      <Global />
      <TitleBar>
        <Progress />
        <Logo>NX</Logo>
        <Sep $m={1} />
        <T i="save" /><T i="saveAs" w={20} /><Sep $m={1} />
        <T i="undo" w={24} /><Drop w={8} /><T i="redo" /><Sep $m={1} />
        <T i="cut" w={22} /><T i="copy" w={20} /><T i="paste" w={20} /><Sep $m={1} />
        <T i="print" /><Sep $m={1} />
        <Space $w={4} /><T i="datum" w={20} /><Drop w={10} /><Sep $m={2} />
        <T i="wipe" /><Sep $m={1} />
        <Space $w={5} />
        <Tool $w={58}><Icon>{art.cascade}</Icon>切换窗口</Tool>
        <Space $w={4} />
        <Tool $w={40}><Icon>{art.windowBlue}</Icon>窗口</Tool>
        <Drop w={8} /><Drop w={10} bar />
        <UserName>鏉庡潩鏉? 18316</UserName>
      </TitleBar>

      <Tabs>
        <Tab $task>任务(T)</Tab>
        <Tab $on>主页</Tab>
        <Tab>分析</Tab>
        <Tab>视图</Tab>
        <Tab>工具</Tab>
      </Tabs>

      <Ribbon>
        <Group $w={192}>
          <GroupBody $pad={8}>
            <BigTool i="flag" w={36}>完成</BigTool>
            <Space $w={4} />
            <SketchCol>
              <Combo label="草图名" value="SKETCH_000" w={87} h={17} />
              <Small i="orient">定向到草图</Small>
              <Small i="reattach">重新附着</Small>
            </SketchCol>
            <BigTool i="update" w={48} disabled>更新模型</BigTool>
          </GroupBody>
          <GroupFoot><GroupName>草图</GroupName><Arrow /></GroupFoot>
        </Group>
        <Group $w={649}>
          <GroupBody $pad={6}>
            <BigTool i="profile" w={36}>轮廓</BigTool>
            <BigTool i="rect" w={36}>矩形</BigTool>
            <BigTool i="line" w={36}>直线</BigTool>
            <BigTool i="arc" w={38}>圆弧</BigTool>
            <BigTool i="circle" w={35}>圆</BigTool>
            <BigTool i="point" w={36}>点</BigTool>
            <Space $w={8} />
            <Gallery $w={166} $cols="82px 1fr">
              <Small i="spline">艺术样条</Small><Small i="polygon">多边形</Small>
              <Small i="ellipse">椭圆</Small><Small i="conic">二次曲线</Small>
              <Small i="offset">偏置曲线</Small><Small i="pattern">阵列曲线</Small>
            </Gallery>
            <GalleryScroll />
            <Space $w={4} />
            <BigTool i="trim" w={47}>快速修剪</BigTool>
            <BigTool i="extend" w={47}>快速延伸</BigTool>
            <Space $w={7} />
            <Gallery $w={112} $cols="1fr">
              <Small i="corner">角焊</Small>
              <Small i="chamfer">倒斜角</Small>
              <Small i="makeCorner">制作拐角</Small>
            </Gallery>
            <GalleryScroll />
          </GroupBody>
          <GroupFoot><GroupName>曲线</GroupName><Arrow /></GroupFoot>
        </Group>
        <Group $w={220}>
          <GroupBody $pad={7}>
            <BigTool i="dim" w={47} drop>快速尺寸</BigTool>
            <BigTool i="geo" w={46}>几何约束</BigTool>
            <BigTool i="sym" w={46}>设为对称</BigTool>
            <BigTool i="show" w={67} hot drop>显示草图约束</BigTool>
          </GroupBody>
          <GroupFoot><GroupName>约束</GroupName><Arrow /></GroupFoot>
        </Group>
      </Ribbon>

      <SelectionBar>
        <Tool $w={56}><Icon>{art.menu}</Icon><span>菜单(<u>M</u>)</span></Tool>
        <Drop w={9} /><Sep $h={20} $m={4} />
        <Space $w={6} />
        <Combo label="选择过滤器" value="无选择过滤器" w={118} />
        <Space $w={7} />
        <Combo label="选择范围" value="整个装配" w={124} />
        <Space $w={6} />
        <Marked><T i="link" hot /></Marked>
        <T i="filterGrey" w={20} /><T i="filterBox" w={20} /><Drop />
        <T i="rotateGrey" w={20} /><T i="marquee" /><Drop />
        <T i="shell" /><T i="cubeGlass" />
        <Space $w={3} />
        <Combo label="曲线规则" value="自动判断曲线" w={124} off />
        <Space $w={6} />
        <T i="hash" /><T i="arrowGrey" /><T i="snapAll" hot /><T i="endPoint" /><T i="midPoint" /><T i="ctrlPoint" />
        <T i="intersect" /><T i="arcCenter" /><T i="quadrant" /><T i="existing" hot /><T i="onCurve" /><T i="onFace" />
        <T i="facet" /><T i="gridPt" /><Sep $h={20} $m={6} />
        <T i="fit" /><T i="pan" /><T i="rotate" /><T i="perspective" /><T i="sheet" />
        <T i="layout" /><Drop /><T i="clip" /><Drop /><T i="cube" /><Drop w={10} /><T i="play" w={20} /><Drop />
        <Sep $h={20} $m={4} />
      </SelectionBar>

      <Body>
        <Rail>
          <RailButton $h={24} aria-label="设置"><Icon size={12}>{art.gear}</Icon></RailButton>
          <RailButton $h={38} $mt={12} aria-label="装配导航器"><Icon size={22} box={22}>{rail.assembly}</Icon></RailButton>
          <RailButton $h={36} aria-label="约束导航器"><Icon size={22} box={22}>{rail.mirror}</Icon></RailButton>
          <RailButton $h={40} $on aria-label="部件导航器"><Icon size={22} box={22}>{rail.part}</Icon></RailButton>
          <RailButton $h={36} aria-label="重用库"><Icon size={22} box={22}>{rail.books}</Icon></RailButton>
          <RailButton $h={48} $mt={4} aria-label="信息"><Icon size={22} box={22}>{rail.info}</Icon></RailButton>
          <RailButton $h={48} aria-label="网页"><Icon size={22} box={22}>{rail.page}</Icon></RailButton>
          <RailButton $h={48} aria-label="历史记录"><Icon size={22} box={22}>{rail.clock}</Icon></RailButton>
          <RailButton $h={26} aria-label="加工向导"><Icon size={20} box={22}>{rail.robot}</Icon></RailButton>
        </Rail>

        <Side>
          <PanelTitle>部件导航器<Maximize aria-label="最大化" /></PanelTitle>
          <Navigator rows={mainRows} total={29} cols={[178, 89, 89, 88, 0]} />
          <Note>
            <Svg width="50" height="88" viewBox="0 0 50 88"><path d="M12.500 1h25v61H49L25 86 1 62h11.500z" fill="none" stroke="#f00" strokeWidth="2" /></Svg>
            完成草图后
          </Note>
          <Snapshot>
            <PanelTitle $small>部件导航器<Maximize $small aria-label="最大化" /></PanelTitle>
            <Navigator small rows={snapRows} total={9} cols={[150, 75, 74, 75, 0]} />
          </Snapshot>
          <RedBox $x={46} $y={397} $w={270} $h={23} />
        </Side>

        <Viewport>
          <FileTabs>
            <FileTab>
              <Icon size={14}><path d="M1 2h5v5H1zM1 10h5v5H1zM9 10h5v5H9z" stroke="#111" strokeWidth="1.500" /><path d="M9 7l5-6" stroke="#f5ce2c" strokeWidth="2.500" /></Icon>
              _model3.prt 在装配中 _asm1.prt
              <Icon size={10} box={10}><path d="M7 2V1H1v8h6V8M4 5h5M7 3l2 2-2 2" stroke="#fff" strokeWidth="1.400" /></Icon>
              <CloseX aria-label="关闭"><Icon size={8} box={8}><path d="M1 1l6 6M7 1L1 7" stroke="#c4c4c4" strokeWidth="1.500" /></Icon></CloseX>
            </FileTab>
          </FileTabs>
          <Canvas>
            <Model />
            <Dialog $x={368} $y={121} $w={290}>
              <DialogTitle $h={21} $size={12}>
                <Icon size={12}><circle cx="8" cy="8" r="5" stroke="#fff" strokeWidth="2.500" /><path d="M8 0v3M8 13v3M0 8h3M13 8h3M2.500 2.500l2 2M11.500 11.500l2 2M2.500 13.500l2-2M11.500 4.500l2-2" stroke="#fff" strokeWidth="2.500" /></Icon>
                <span>投影曲线</span>
                <CloseX aria-label="重置"><Icon size={12} box={12}><path d="M6 1a5 5 0 1 1-4 7M1 4l1 4 4-1" stroke="#fff" strokeWidth="1.500" /></Icon></CloseX>
                <CloseX aria-label="关闭"><Icon size={11} box={11}><path d="M1 1l9 9M10 1l-9 9" stroke="#fff" strokeWidth="2" /></Icon></CloseX>
              </DialogTitle>
              <Section>
                <SectionTitle>要投影的对象<Icon size={10} box={10}><path d="M1 8l4-6 4 6" stroke="#1b6f8e" strokeWidth="2" /></Icon></SectionTitle>
                <PickRow>
                  <Pick>
                    <Icon size={11} box={11}><path d="M5.500 0v11M1 3l9 5M10 3L1 8" stroke="#d60000" strokeWidth="2" /></Icon>
                    选择曲线或点 (0)
                  </Pick>
                  <PickTool aria-label="点构造器"><Icon><path d="M10 1v8M6 5h8" stroke="#111" strokeWidth="1.300" /><path d="M1 7c0 4 2 5 5 5" stroke="#e2672a" strokeWidth="1.800" /><path d="M5 9l4 3-4 3z" fill="#e2672a" stroke="none" /><path d="M9 14.500h6" stroke="#111" strokeWidth="1.600" strokeDasharray="1.600 1" /></Icon></PickTool>
                  <PickTool $on aria-label="选择曲线"><Icon><circle cx="8" cy="8" r="4.500" stroke="#d82a12" strokeWidth="1.500" /><path d="M8 0v16M0 8h16" stroke="#222" strokeWidth="1.200" /></Icon></PickTool>
                </PickRow>
              </Section>
              <Buttons>
                <PushButton disabled>确定</PushButton>
                <PushButton disabled>应用</PushButton>
                <PushButton>取消</PushButton>
              </Buttons>
            </Dialog>

            <Dialog $x={483} $y={382} $w={267} $edge>
              <DialogTitle $h={25} $size={11} $pad={8}><span>部件间复制</span></DialogTitle>
              <Message>
                <Icon size={28} box={28}>
                  <circle cx="14" cy="14" r="13" fill="#1c3fb4" stroke="#aab0b8" strokeWidth="2" />
                  <ellipse cx="14" cy="9" rx="10" ry="7" fill="#6f92e8" stroke="none" opacity=".6" />
                  <path d="M14 11v11" stroke="#fff" strokeWidth="4" /><circle cx="14" cy="6.500" r="2.300" fill="#fff" stroke="none" />
                </Icon>
                <span>此选择将作为 WAVE 链接添加到工作部件</span>
              </Message>
              <Never><Tick type="checkbox" $s={12} />不再显示此消息</Never>
              <Buttons $spread>
                <PushButton $wide $primary>确定(<u>O</u>)</PushButton>
                <PushButton $wide>取消(<u>C</u>)</PushButton>
              </Buttons>
            </Dialog>
            <RedBox $x={479} $y={375} $w={269} $h={128} />
            <Watermark>CSDN @Andy2Li</Watermark>
          </Canvas>
        </Viewport>
      </Body>
    </Window>
  );
}
